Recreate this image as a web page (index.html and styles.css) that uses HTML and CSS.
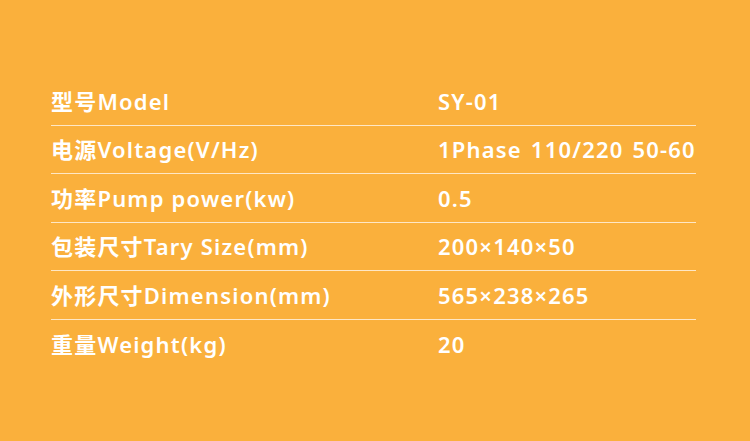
FILE: index.html
```html
<!DOCTYPE html>
<html lang="zh">
<head>
<meta charset="utf-8">
<link rel="stylesheet" href="styles.css">
</head>
<body>
<div class="spec">
  <div class="row"><span class="k">型号Model</span><span class="v">SY-01</span></div>
  <div class="row"><span class="k">电源Voltage(V/Hz)</span><span class="v">1Phase 110/220 50-60</span></div>
  <div class="row"><span class="k">功率Pump power(kw)</span><span class="v">0.5</span></div>
  <div class="row"><span class="k">包装尺寸Tary Size(mm)</span><span class="v">200×140×50</span></div>
  <div class="row"><span class="k">外形尺寸Dimension(mm)</span><span class="v">565×238×265</span></div>
  <div class="row last"><span class="k">重量Weight(kg)</span><span class="v">20</span></div>
</div>
</body>
</html>
```
FILE: styles.css
```css
html, body {
  margin: 0;
  padding: 0;
}
body {
  width: 750px;
  height: 441px;
  background: #fab03c;
  font-family: "Noto Sans", "Noto Sans CJK SC", sans-serif;
  font-weight: 600;
  color: #ffffff;
  overflow: hidden;
}
.spec {
  margin: 77px 0 0 51px;
  width: 645px;
}
.row {
  display: grid;
  grid-template-columns: 387px 1fr;
  height: 48.5px;
  align-items: center;
  font-size: 22px;
  line-height: 1;
  letter-spacing: 1.2px;
  box-sizing: border-box;
  border-bottom: 1px solid rgba(255, 255, 255, 0.7);
}
.row.last {
  border-bottom: none;
}
.k, .v {
  white-space: nowrap;
}
.v {
  word-spacing: 2px;
}
```
